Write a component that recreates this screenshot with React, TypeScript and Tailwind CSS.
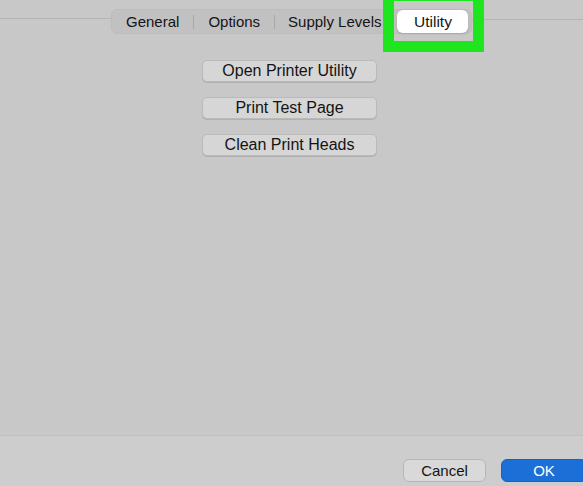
import React from 'react';

const tabs = ['General', 'Options', 'Supply Levels'];
const actions = ['Open Printer Utility', 'Print Test Page', 'Clean Print Heads'];

export default function App() {
  return (
    <div
      className="relative w-[583px] h-[486px] overflow-hidden bg-[#c8c8c8] flex flex-col text-[#141414]"
      style={{ fontFamily: '"Liberation Sans", Arial, sans-serif' }}
    >
      {/* Tab bar */}
      <div className="flex items-start h-[60px] pt-[9px]">
        <div className="w-[111px] h-px mt-[9px] bg-[#b4b4b4]" />
        <div className="flex items-center h-[25px] rounded-md bg-[#c1c1c1] border border-[#bcbcbc] pr-[3px]">
          {tabs.map((t, i) => (
            <div key={t} className="flex items-center h-full">
              {i > 0 && <div className="w-px h-[14px] bg-[#a9a9a9]" />}
              <div
                className={`text-[15px] leading-none ${
                  i === 2 ? 'pl-[13px] pr-[16px]' : 'px-[14px]'
                }`}
              >
                {t}
              </div>
            </div>
          ))}
          <div className="flex items-center justify-center w-[71px] h-[23px] rounded-md bg-white shadow-sm text-[15.5px] leading-none">
            Utility
          </div>
        </div>
        <div className="flex-1 h-px mt-[10px] bg-[#b4b4b4]" />
      </div>

      {/* Actions */}
      <div className="flex-1 flex flex-col items-center gap-[15px] pr-[4px]">
        {actions.map((a) => (
          <button
            key={a}
            className="w-[175px] h-[22px] rounded-[5px] bg-[#d6d6d6] border border-[#bababa] shadow-[0_1px_0_#b0b0b0] text-[16px] leading-none"
          >
            {a}
          </button>
        ))}
      </div>

      {/* Footer */}
      <div className="h-[51px] border-t border-[#c0c0c0] bg-[#cdcdcd] flex items-start justify-end pt-[23px] gap-[15px] -mr-[4px]">
        <button className="w-[83px] h-[23px] rounded-md bg-[#d9d9d9] border border-[#b6b6b6] text-[15px] leading-none">
          Cancel
        </button>
        <button className="w-[86px] h-[23px] rounded-md bg-[#1b6fd6] border border-[#1762c0] text-white text-[15px] leading-none">
          OK
        </button>
      </div>

      {/* Highlight overlay */}
      <div className="absolute left-[383px] -top-[10px] w-[101px] h-[62px] border-[11px] border-[#1ee51e]" />
    </div>
  );
}
